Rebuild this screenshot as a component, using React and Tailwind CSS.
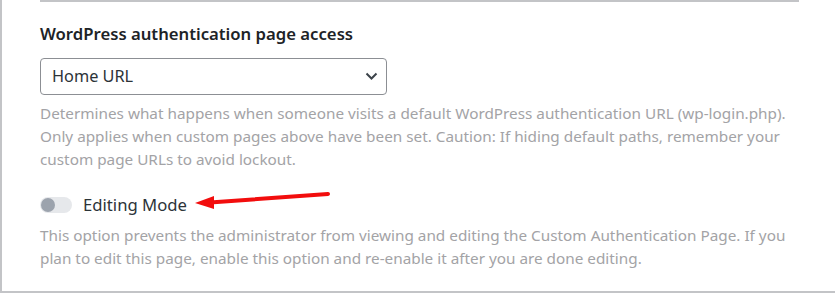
import React, { useState } from "react";

function Toggle({ on, onChange }) {
  return (
    <button
      type="button"
      onClick={() => onChange(!on)}
      className={`relative h-[16px] w-[32px] shrink-0 rounded-full ${on ? "bg-[#2271b1]" : "bg-[#e6e8eb]"}`}
    >
      <span
        className={`absolute top-[1px] h-[14px] w-[14px] rounded-full ${on ? "left-[17px] bg-white" : "left-[1px] bg-[#9ca3ad]"}`}
      />
    </button>
  );
}

function App() {
  const [access, setAccess] = useState("home");
  const [editing, setEditing] = useState(false);

  return (
    <div className="h-[294px] w-[835px] overflow-hidden bg-white font-['Segoe_UI','Noto_Sans',sans-serif]">
      <div className="h-[293px] border-b-2 border-l-2 border-[#c3c4c7]">
        <div className="ml-[38px] mr-[36px] border-t-2 border-[#c3c4c7] pt-[21px]">
          <h2 className="text-[16.7px] font-semibold leading-[22px] text-[#1d2327]">
            WordPress authentication page access
          </h2>

          <div className="relative mt-[13px] w-[347px]">
            <select
              value={access}
              onChange={(e) => setAccess(e.target.value)}
              className="h-[37px] w-full appearance-none rounded-[4px] border border-[#8c8f94] bg-white pl-[11px] text-[16.3px] text-[#2c3338] outline-none"
            >
              <option value="home">Home URL</option>
              <option value="404">404 page</option>
              <option value="allow">Allow access</option>
            </select>
            {/* chevron */}
            <svg
              className="pointer-events-none absolute right-[9px] top-[14px]"
              width="13"
              height="9"
              viewBox="0 0 13 9"
              fill="none"
            >
              <path d="M1.5 1.5 L6.5 6.5 L11.5 1.5" stroke="#3c434a" strokeWidth="2" />
            </svg>
          </div>

          <p className="mt-[7px] w-[757px] text-[15.3px] leading-[23px] text-[#a3a3a6]">
            Determines what happens when someone visits a default WordPress authentication URL (wp-login.php).
            Only applies when custom pages above have been set. Caution: If hiding default paths, remember your
            custom page URLs to avoid lockout.
          </p>

          <div className="relative mt-[22px] flex items-center gap-[11px]">
            <Toggle on={editing} onChange={setEditing} />
            <span className="text-[16.7px] leading-[24px] text-[#2c3338]">Editing Mode</span>
            {/* red annotation arrow */}
            <svg
              className="pointer-events-none absolute left-[150px] top-[-5px]"
              width="145"
              height="26"
              viewBox="0 0 145 26"
            >
              <line x1="138" y1="6" x2="20" y2="14.5" stroke="#f20d0d" strokeWidth="4" strokeLinecap="round" />
              <polygon points="5,15 24,8 24,21" fill="#f20d0d" />
            </svg>
          </div>

          <p className="mt-[7px] w-[757px] text-[15.3px] leading-[23px] text-[#a3a3a6]">
            This option prevents the administrator from viewing and editing the Custom Authentication Page. If you
            plan to edit this page, enable this option and re-enable it after you are done editing.
          </p>
        </div>
      </div>
    </div>
  );
}

export default App;
